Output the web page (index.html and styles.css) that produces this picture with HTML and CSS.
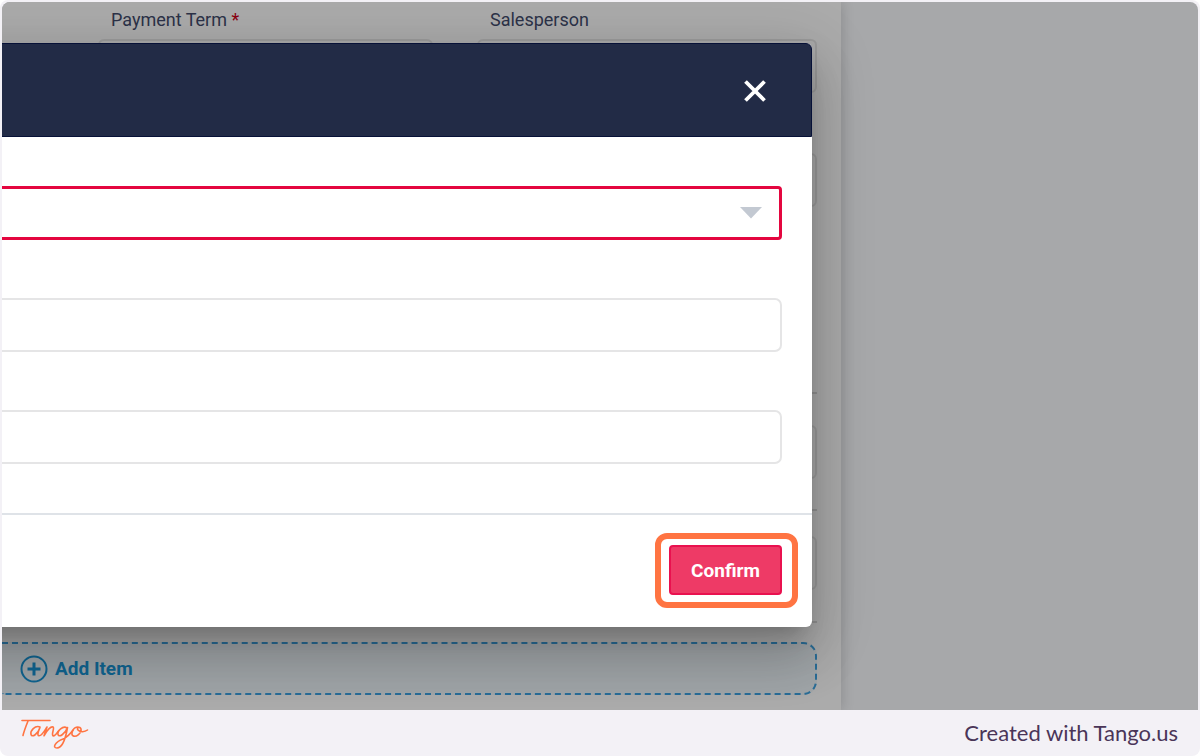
FILE: index.html
```html
<!DOCTYPE html>
<html lang="en">
<head>
    <meta charset="UTF-8">
    <meta name="viewport" content="width=device-width, initial-scale=1.0">
    <title>Confirm</title>
    <link rel="stylesheet" href="styles.css">
</head>
<body>
    <div class="frame">
        <div class="screen">
            <main class="sheet">
                <form class="order">
                    <div class="row">
                        <div class="field">
                            <label for="term">Payment Term <span class="required">*</span></label>
                            <input id="term" class="box" type="text">
                        </div>
                        <div class="field">
                            <label for="sales">Salesperson</label>
                            <input id="sales" class="box" type="text">
                        </div>
                    </div>
                    <div class="line first"><input class="box" type="text" aria-label="Reference"></div>
                    <div class="line second"><input class="box" type="text" aria-label="Item"></div>
                    <div class="line third"><input class="box" type="text" aria-label="Quantity"></div>
                    <button class="add" type="button">
                        <svg width="28" height="28" viewBox="0 0 28 28" fill="none" stroke="currentColor">
                            <circle cx="14" cy="14" r="12.5" stroke-width="2"/>
                            <path d="M14 7.5v13M7.5 14h13" stroke-width="3"/>
                        </svg>
                        Add Item
                    </button>
                </form>

                <div class="modal" role="dialog">
                    <div class="modal-head">
                        <button class="close" type="button" aria-label="Close">
                            <svg width="24" height="24" viewBox="0 0 24 24" fill="none" stroke="#fff" stroke-width="3.8">
                                <path d="M2.5 2.5l19 19M21.5 2.5l-19 19"/>
                            </svg>
                        </button>
                    </div>
                    <div class="modal-body">
                        <div class="select">
                            <select class="input invalid" aria-label="Type"><option></option></select>
                            <svg class="arrow" width="22" height="12" viewBox="0 0 22 12"><path d="M0 0h22L11 11.5z" fill="#c3c9d2"/></svg>
                        </div>
                        <input class="input" type="text" aria-label="Name">
                        <input class="input" type="text" aria-label="Value">
                    </div>
                    <div class="modal-foot">
                        <div class="ring"><button class="confirm" type="button">Confirm</button></div>
                    </div>
                </div>
            </main>
            <aside class="side"></aside>
        </div>

        <footer class="credit">
            <svg class="logo" width="70" height="34" viewBox="0 0 70 34" fill="none" stroke="#ff7442" stroke-width="1.6" stroke-linecap="round" stroke-linejoin="round" role="img" aria-label="Tango">
                <path d="M2 4.500H30"/>
                <path d="M8 5C6 10 4 15 3 19.500"/>
                <path d="M20 11C15 9 10 15 11 18.500C12 22 18 18 20 11.500C18 16 17 19.500 19 19.800C22 20 25 14 27 11C26 14 25 17 24 19.800C27 14 31 10 33 11C35 12 31 18 33 19.800C35 20.500 37 17 38.500 15"/>
                <path d="M47 12C43 9 37 15 38 18.500C39 22 45 18 47.500 11.500C46 20 43 32 37 32C32 32 35 26 43 23C48 20.500 51 17 53 14"/>
                <path d="M58 11C53 11 50.500 18 53 19.800C56 21.500 62 17 61 13C60 10 56 11.500 58 14C60 16.500 65 16 67.500 14"/>
            </svg>
            <span>Created with Tango.us</span>
        </footer>
    </div>
</body>
</html>
```
FILE: styles.css
```css
*{
    box-sizing: border-box;
}
body{
    margin: 0;
    background: #fff;
    font-family: Roboto, sans-serif;
}
button,input,select{
    font-family: inherit;
    margin: 0;
}
button{
    padding: 0;
    border: none;
    cursor: pointer;
}

.frame{
    display: flex;
    flex-direction: column;
    min-height: 100vh;
    padding: 2px 2px 0;
    border-radius: 8px;
    background: #f3f1f6;
}
.screen{
    flex: 1;
    display: grid;
    grid-template-columns: 839fr 357fr;
    overflow: hidden;
    border-radius: 8px 8px 0 0;
    background: #a7a8aa;
}

/* form behind the dialog */
.sheet{
    position: relative;
    z-index: 1;
    background: #ababab;
    box-shadow: 1px 0 12px rgba(0,0,0,0.16);
}
.order{
    display: flex;
    flex-direction: column;
    padding: 7px 24px 15px 0;
}
.row{
    display: grid;
    grid-template-columns: 335fr 340fr;
    gap: 44px;
    padding-left: 96px;
}
.field{
    display: flex;
    flex-direction: column;
    gap: 8px;
}
.field label{
    padding-left: 13px;
    font-size: 18px;
    line-height: 22px;
    color: #2c3248;
}
.required{
    color: #8b0010;
}
.box{
    width: 100%;
    height: 54px;
    border: 2px solid #9b9b9b;
    border-radius: 6px;
    background: transparent;
}
.line{
    border-bottom: 2px solid #929292;
}
.first{
    padding: 60px 0 185px;
}
.second{
    padding: 31px 0 30px;
}
.third{
    padding: 25px 0 31px;
}
.add{
    display: flex;
    align-items: center;
    gap: 7px;
    height: 53px;
    margin-top: 19px;
    padding-left: 18px;
    border: 2px dashed #2a6d97;
    border-left: none;
    border-radius: 0 14px 14px 0;
    background: #a0a5a8;
    font-size: 19px;
    font-weight: 700;
    color: #106490;
}

/* runs on past the left edge of the screen */
.modal{
    position: absolute;
    top: 41px;
    left: -80px;
    right: 29px;
    border-radius: 6px;
    background: #fff;
    box-shadow: 0 14px 20px -9px rgba(0,0,0,0.2),
        0 31px 50px 4px rgba(0,0,0,0.14),
        0 12px 60px 10px rgba(0,0,0,0.12);
}
.modal-head{
    display: flex;
    align-items: center;
    justify-content: flex-end;
    height: 94px;
    padding: 2px 44px 0 0;
    border: 1px solid #071137;
    border-radius: 6px 6px 0 0;
    background: #222b46;
}
.close{
    display: flex;
    background: none;
}
.modal-body{
    display: flex;
    flex-direction: column;
    gap: 58px;
    padding: 49px 30px 49px;
}
.select{
    position: relative;
}
.input{
    display: block;
    width: 100%;
    height: 54px;
    border: 2px solid #e5e5e6;
    border-radius: 7px;
    background: #fff;
}
.invalid{
    appearance: none;
    border: 3px solid #e4063f;
    border-radius: 4px;
}
.arrow{
    position: absolute;
    top: 21px;
    right: 20px;
    pointer-events: none;
}
.modal-foot{
    display: flex;
    justify-content: flex-end;
    padding: 18px 14px 19px 0;
    border-top: 2px solid #dfe3e8;
}
/* highlight round the main action */
.ring{
    padding: 6px 10px 7px 8px;
    border: 6px solid #ff7442;
    border-radius: 12px;
}
.confirm{
    display: block;
    width: 113px;
    height: 50px;
    border: 2px solid #e9114f;
    border-radius: 4px;
    background: #ee3a66;
    font-size: 19px;
    font-weight: 700;
    color: #fff;
}

.credit{
    display: flex;
    align-items: center;
    justify-content: space-between;
    height: 46px;
    padding: 0 20px 0 18px;
    font-family: Lato, sans-serif;
    font-size: 22px;
    line-height: 24px;
    color: #4a3558;
}
```
